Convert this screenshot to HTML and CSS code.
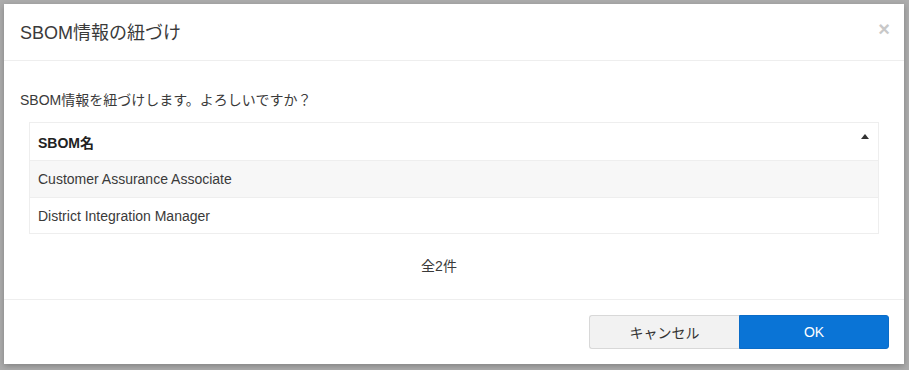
FILE: index.html
```html
<!DOCTYPE html>
<html lang="ja">
<head>
    <meta charset="UTF-8">
    <title>SBOM情報の紐づけ</title>
    <link rel="stylesheet" href="styles.css">
</head>
<body>
    <div class="backdrop">
        <div class="modal">
            <!-- Header -->
            <div class="modal-header">
                <h2>SBOM情報の紐づけ</h2>
                <span class="close">&times;</span>
            </div>

            <!-- Body -->
            <div class="modal-body">
                <p class="lead">SBOM情報を紐づけします。よろしいですか？</p>
                <table class="sbom-table">
                    <thead>
                        <tr>
                            <th>SBOM名<span class="sort"></span></th>
                        </tr>
                    </thead>
                    <tbody>
                        <tr class="striped"><td>Customer Assurance Associate</td></tr>
                        <tr><td>District Integration Manager</td></tr>
                    </tbody>
                </table>
                <p class="count">全2件</p>
            </div>

            <!-- Footer -->
            <div class="modal-footer">
                <button class="btn btn-cancel">キャンセル</button>
                <button class="btn btn-ok">OK</button>
            </div>
        </div>
    </div>
</body>
</html>
```
FILE: styles.css
```css
* {
    margin: 0;
    padding: 0;
    box-sizing: border-box;
}

body {
    font-family: 'Liberation Sans', Arial, 'Noto Sans CJK JP', sans-serif;
    color: #333;
    background-color: #acacac;
}

.backdrop {
    width: 909px;
    height: 370px;
    padding: 4px;
    background-color: #acacac;
    overflow: hidden;
}

/* Dialog box */
.modal {
    width: 900px;
    height: 360px;
    background-color: #fff;
    box-shadow: 0 2px 6px rgba(0, 0, 0, 0.25);
    display: flex;
    flex-direction: column;
}

.modal-header {
    height: 57px;
    padding: 0 16px;
    border-bottom: 1px solid #eee;
    display: flex;
    align-items: center;
    justify-content: space-between;
}

.modal-header h2 {
    font-size: 18px;
    font-weight: normal;
    color: #3a3a3a;
    margin-top: -2px;
}

.close {
    font-size: 20px;
    font-weight: bold;
    color: #c8c8c8;
    margin-right: -2px;
    margin-top: -6px;
}

.modal-body {
    height: 239px;
    padding: 0 16px 0 16px;
    border-bottom: 1px solid #eee;
}

.lead {
    font-size: 14px;
    margin-top: 31px;
    line-height: 17px;
    color: #3a3a3a;
}

/* Table */
.sbom-table {
    width: 850px;
    margin: 13px 0 0 9px;
    border-collapse: collapse;
    font-size: 14px;
    color: #3a3a3a;
}

.sbom-table th,
.sbom-table td {
    text-align: left;
    padding: 0 8px;
    border: 1px solid #eee;
}

.sbom-table th {
    height: 38px;
    font-weight: bold;
    position: relative;
    color: #222;
}

.sbom-table td {
    height: 37px;
}

.sbom-table tr:last-child td {
    height: 36px;
}

.striped td {
    background-color: #f7f7f7;
}

.sort {
    position: absolute;
    right: 9px;
    top: 11px;
    width: 0;
    height: 0;
    border-left: 4px solid transparent;
    border-right: 4px solid transparent;
    border-bottom: 5px solid #333;
}

.count {
    text-align: center;
    font-size: 14px;
    margin-top: 21px;
    padding-right: 30px;
    color: #3a3a3a;
}

/* Footer buttons */
.modal-footer {
    flex: 1;
    display: flex;
    justify-content: flex-end;
    align-items: flex-start;
    padding: 15px 15px 0 0;
}

.btn {
    width: 150px;
    height: 34px;
    font-family: inherit;
    font-size: 14px;
    border-radius: 3px;
    cursor: pointer;
}

.btn-cancel {
    background-color: #f2f2f2;
    border: 1px solid #d8d8d8;
    border-right: none;
    border-radius: 3px 0 0 3px;
    color: #333;
}

.btn-ok {
    background-color: #0a74d6;
    border: 1px solid #0a6cc8;
    border-radius: 0 3px 3px 0;
    color: #fff;
}
```
